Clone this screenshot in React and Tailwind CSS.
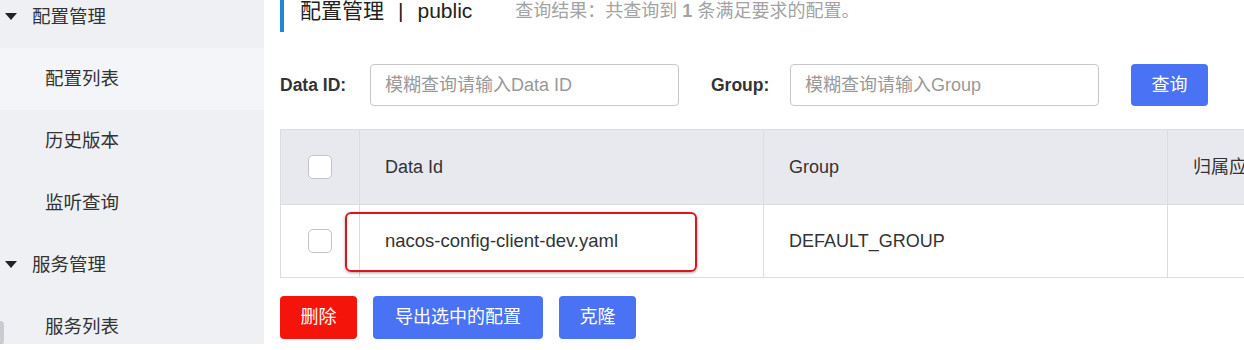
import React from "react";

const font = { fontFamily: '"Liberation Sans", "Noto Sans CJK SC", sans-serif' };

// sidebar tree: groups with children
const menu = [
  { title: "配置管理", children: ["配置列表", "历史版本", "监听查询"] },
  { title: "服务管理", children: ["服务列表"] },
];

function Caret() {
  return (
    <svg width="12" height="8" viewBox="0 0 12 8" className="mr-[15px]">
      <path d="M0 0 L12 0 L6 7 Z" fill="#222" />
    </svg>
  );
}

function Checkbox() {
  return (
    <div className="w-[24px] h-[24px] rounded-[5px] border border-[#c2c4cb] bg-white mx-auto" />
  );
}

function Sidebar() {
  return (
    <div className="relative w-[264px] h-[344px] shrink-0 bg-[#eef0f4] overflow-hidden">
      <div className="-mt-[14px]">
        {menu.map((group) => (
          <div key={group.title}>
            <div className="h-[62px] flex items-center pl-[5px] text-[18.5px] text-[#333]">
              <Caret />
              {group.title}
            </div>
            {group.children.map((item) => (
              <div
                key={item}
                className={`h-[62px] flex items-center pl-[45px] text-[18.5px] text-[#333] ${
                  item === "配置列表" ? "bg-[#f4f5f8]" : ""
                }`}
              >
                {item}
              </div>
            ))}
          </div>
        ))}
      </div>
      <div className="absolute left-0 top-[321px] w-[4px] h-[24px] rounded-r bg-[#c9cbd0]" />
    </div>
  );
}

export default function App() {
  return (
    <div style={font} className="flex h-[350px] w-[1244px] bg-white overflow-hidden">
      <Sidebar />
      <div className="flex-1 pl-[16px] min-w-0">
        {/* title */}
        <div className="-mt-[10px] flex items-center">
          <div className="w-[4px] h-[42px] bg-[#1f8ad2]" />
          <span className="ml-[16px] text-[21px] text-[#222]">配置管理</span>
          <span className="mx-[14px] text-[21px] text-[#222]">|</span>
          <span className="text-[21px] text-[#222]">public</span>
          <span className="ml-[43px] text-[18px] text-[#a3a3a3] whitespace-nowrap">
            查询结果：共查询到 <b className="font-bold">1</b> 条满足要求的配置。
          </span>
        </div>

        {/* filters */}
        <div className="mt-[32px] flex items-center h-[42px]">
          <label className="w-[90px] text-[17.5px] font-bold text-[#333]">Data ID:</label>
          <input
            className="w-[309px] h-[42px] rounded-[4px] border border-[#c8c8c8] px-[14px] text-[18px] placeholder:text-[#999] outline-none"
            placeholder="模糊查询请输入Data ID"
          />
          <label className="ml-[32px] w-[79px] text-[17.5px] font-bold text-[#333]">Group:</label>
          <input
            className="w-[309px] h-[42px] rounded-[4px] border border-[#c8c8c8] px-[14px] text-[18px] placeholder:text-[#999] outline-none"
            placeholder="模糊查询请输入Group"
          />
          <button className="ml-[32px] w-[77px] h-[42px] rounded-[4px] bg-[#4a72f5] text-white text-[18px]">
            查询
          </button>
        </div>

        {/* table */}
        <div className="relative mt-[23px] w-[1120px]">
          <table className="border-collapse w-full table-fixed text-[18px] text-[#333]">
            <colgroup>
              <col className="w-[79px]" />
              <col className="w-[404px]" />
              <col className="w-[404px]" />
              <col />
            </colgroup>
            <thead>
              <tr className="h-[75px] bg-[#e8e9ee]">
                <th className="border border-[#dcdde2]"><Checkbox /></th>
                <th className="border border-[#dcdde2] text-left font-normal pl-[25px]">Data Id</th>
                <th className="border border-[#dcdde2] text-left font-normal pl-[25px]">Group</th>
                <th className="border border-[#dcdde2] text-left font-normal pl-[25px] whitespace-nowrap">归属应用</th>
              </tr>
            </thead>
            <tbody>
              <tr className="h-[73px] bg-white">
                <td className="border border-[#dcdde2]"><Checkbox /></td>
                <td className="border border-[#dcdde2] pl-[25px] text-[18.5px]">nacos-config-client-dev.yaml</td>
                <td className="border border-[#dcdde2] pl-[25px]">DEFAULT_GROUP</td>
                <td className="border border-[#dcdde2]"></td>
              </tr>
            </tbody>
          </table>
          {/* highlight annotation */}
          <div className="absolute left-[65px] top-[83px] w-[352px] h-[60px] rounded-[6px] border-2 border-[#e0141c] shadow-[0_1px_3px_rgba(0,0,0,0.35)]" />
        </div>

        {/* actions */}
        <div className="mt-[18px] flex gap-[16px]">
          <button className="w-[77px] h-[43px] rounded-[4px] bg-[#f5140a] text-white text-[18px]">删除</button>
          <button className="w-[170px] h-[43px] rounded-[4px] bg-[#4a72f5] text-white text-[18px]">导出选中的配置</button>
          <button className="w-[77px] h-[43px] rounded-[4px] bg-[#4a72f5] text-white text-[18px]">克隆</button>
        </div>
      </div>
    </div>
  );
}
